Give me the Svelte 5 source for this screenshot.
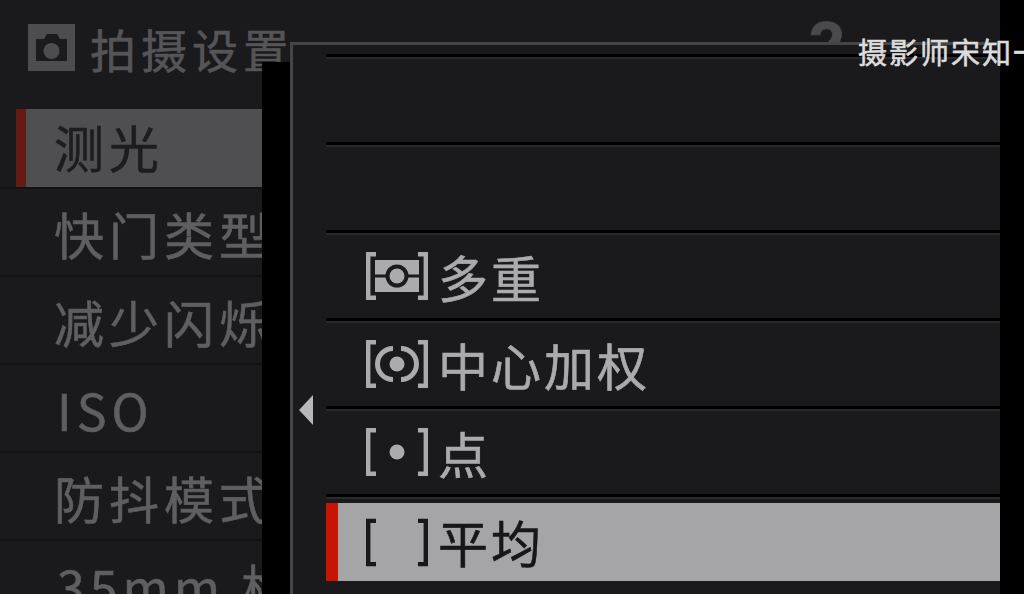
<script>
  const menu = [
    { label: '测光', selected: true },
    { label: '快门类型' },
    { label: '减少闪烁' },
    { label: 'ISO', latin: true },
    { label: '防抖模式' },
    { label: '35mm 格式模式', latin: true }
  ];
  const options = [
    { label: '' }, { label: '' },
    { label: '多重', icon: 'multi' },
    { label: '中心加权', icon: 'center' },
    { label: '点', icon: 'spot' },
    { label: '平均', icon: 'avg', selected: true }
  ];
</script>

<div class="screen">
  <main class="panel">
    <header class="head">
      <svg class="cam" viewBox="0 0 47 47" aria-hidden="true">
        <rect width="47" height="47" fill="#4d4c4f" />
        <path d="M8 15h8l3-5h10l3 5h7v22H8z" fill="#1b1a1d" />
        <circle cx="23.5" cy="27" r="8" fill="#4d4c4f" />
      </svg>
      <h1>拍摄设置</h1>
      <span class="page">2</span>
    </header>
    <ul class="menu">
      {#each menu as item}
        <li class:sel={item.selected} class:latin={item.latin}><span class="mark"></span><span class="lab">{item.label}</span></li>
      {/each}
    </ul>
  </main>

  <div class="band"></div>
  <section class="popup">
    <span class="arrow"></span>
    <ul class="opts">
      {#each options as o}
        <li class:on={o.selected}>
          <div class="inner">
            {#if o.icon}
              <svg class="ic" viewBox="0 0 62 48" aria-hidden="true">
                <path class="br" d="M10 2.2H2.2v43.6H10M52 2.2h7.8v43.6H52" />
                {#if o.icon === 'multi'}
                  <rect x="9" y="8" width="44" height="32" fill="currentColor" />
                  <path class="cut" d="M9 24h12M41 24h12" />
                  <circle cx="31" cy="24" r="11.5" fill="#1b1a1d" />
                  <circle cx="31" cy="24" r="7.5" fill="currentColor" />
                {:else if o.icon === 'center'}
                  <circle cx="31" cy="24" r="7.5" fill="currentColor" />
                  <path class="arc" d="M27 8.5A15.5 15.5 0 0 0 27 39.5M35 8.5A15.5 15.5 0 0 1 35 39.5" />
                {:else if o.icon === 'spot'}
                  <circle cx="31" cy="24" r="7.5" fill="currentColor" />
                {/if}
              </svg>
            {/if}
            <span class="txt">{o.label}</span>
          </div>
        </li>
      {/each}
    </ul>
  </section>
  <div class="edge"></div>
  <div class="wm">摄影师宋知一</div>
</div>

<style>
  :global(body) { margin: 0; background: #000; }
  .screen {
    position: relative; width: 1024px; height: 594px; overflow: hidden;
    background: #1a191c; color: #5f5e61;
    font-family: "Noto Sans CJK SC", "Noto Sans", sans-serif;
    -webkit-text-stroke: 0.6px currentColor;
  }
  ul { list-style: none; margin: 0; padding: 0; }
  .panel { width: 1000px; }
  .head { display: flex; align-items: center; height: 101px; box-sizing: border-box; padding: 0 155px 6px 28px; }
  .cam { width: 47px; height: 47px; flex: none; }
  h1 { margin: 0 0 0 15px; font-size: 46px; line-height: 1; font-weight: 400; letter-spacing: 5px; color: #555457; white-space: nowrap; }
  .page { margin-left: auto; font-family: "Liberation Sans", sans-serif; font-size: 66px; font-weight: 700; line-height: 1; color: #4a494c; transform: translateY(-3px); }
  .menu li { height: 88px; box-sizing: border-box; display: flex; align-items: center; border-bottom: 2px solid #121114; white-space: nowrap; overflow: hidden; }
  .lab { margin-left: 54px; font-size: 50px; letter-spacing: 5px; line-height: 1; transform: translateY(1px); }
  .menu li.latin .lab { margin-left: 57px; }
  .mark { display: none; }
  .menu li.sel { padding: 7px 0 0 16px; }
  .menu li.sel .mark { display: block; width: 10px; height: 78px; background: #651a14; flex: none; }
  .menu li.sel .lab { margin-left: 0; padding: 0 0 4px 28px; box-sizing: border-box; height: 78px; width: 100%; display: flex; align-items: center; background: #4f4e51; color: #1d1c1f; transform: none; }

  .band { position: absolute; left: 262px; top: 62px; bottom: 0; width: 28px; background: #000; }
  .popup { position: absolute; left: 290px; top: 42px; right: 24px; bottom: 0; box-sizing: border-box; background: #1a191c; border-left: 3px solid #454447; border-top: 3px solid #454447; padding: 9px 0 0 33px; }
  .arrow { position: absolute; left: 6px; top: 350px; width: 0; height: 0; border-style: solid; border-width: 15px 14px 15px 0; border-color: transparent #b8b7b9 transparent transparent; }
  .opts li { height: 88px; box-sizing: border-box; border-top: 3px solid #000; box-shadow: inset 0 2px 0 #2a292c; color: #ababad; }
  .inner { height: 85px; box-sizing: border-box; display: flex; align-items: center; padding-left: 40px; font-size: 50px; letter-spacing: 3px; line-height: 1; }
  .opts li.on { padding-top: 6px; }
  .opts li.on .inner { height: 78px; padding: 0 0 3px 28px; background: #a5a4a7; border-left: 12px solid #c81405; color: #17161a; }
  .ic { width: 62px; height: 48px; flex: none; margin-right: 10px; }
  .on .ic { transform: translateY(1.5px); }
  .br { fill: none; stroke: currentColor; stroke-width: 4.4; }
  .arc { fill: none; stroke: currentColor; stroke-width: 5; }
  .cut { fill: none; stroke: #1b1a1d; stroke-width: 3; }
  .edge { position: absolute; right: 0; top: 0; bottom: 0; width: 24px; background: #000; }
  .wm { position: absolute; left: 858px; top: 33px; font-size: 29px; line-height: 1.3; letter-spacing: 2px; color: #dcdcdc; white-space: nowrap; }
</style>
